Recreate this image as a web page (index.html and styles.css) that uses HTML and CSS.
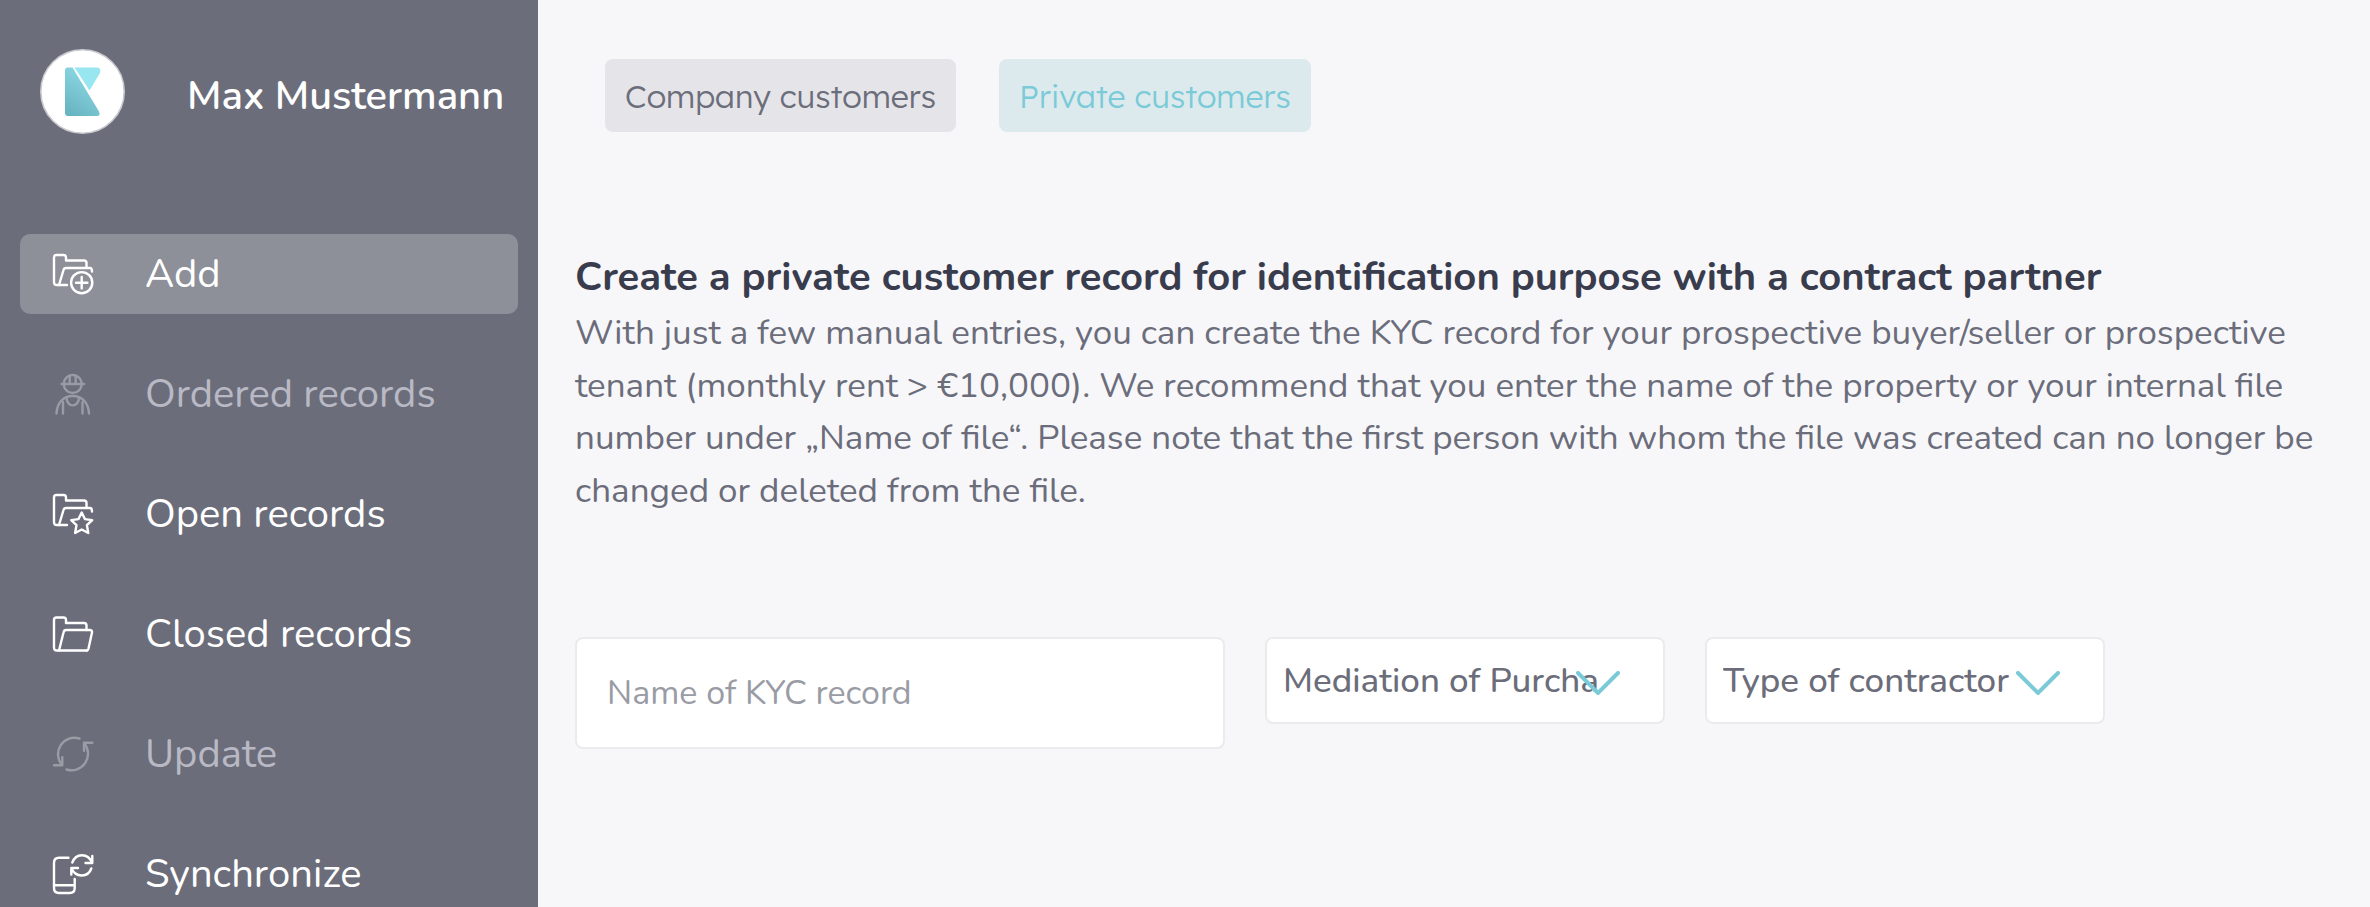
FILE: index.html
```html
<!DOCTYPE html>
<html lang="en">
<head>
    <meta charset="UTF-8">
    <meta name="viewport" content="width=device-width, initial-scale=1.0">
    <title>KYC records</title>
    <link rel="stylesheet" href="styles.css">
</head>
<body>

    <aside class="sidebar">
        <div class="profile">
            <svg class="avatar" viewBox="0 0 85 85" aria-hidden="true">
                <defs>
                    <linearGradient id="logoGradient" x1="0.7" y1="0" x2="0.2" y2="1">
                        <stop offset="0" stop-color="#8fdde9"/>
                        <stop offset="1" stop-color="#68b3c0"/>
                    </linearGradient>
                </defs>
                <circle cx="42.5" cy="42.5" r="41.7" fill="#fff" stroke="#c9c9ce" stroke-width="1.6"/>
                <path d="M28 18.500h4.500L59 62.500q2 4.500-2.500 4.500H28q-3 0-3-3V21.500q0-3 3-3z" fill="url(#logoGradient)"/>
                <path d="M34.500 18.500H57.500q4 1 2.500 5.500L49.500 41.500z" fill="#98e6f0"/>
            </svg>
            <span class="name">Max Mustermann</span>
        </div>

        <nav class="menu">
            <a href="#" class="item active">
                <svg class="icon" viewBox="0 0 41 41">
                    <path d="M14 31H4q-3 0-3-3V3.500Q1 1 3.500 1h7q2.500 0 2.500 2.500v3h18q2.500 0 2.500 2.500v4.500"/>
                    <path d="M6 31l4.500-15q.5-2 2.500-2h24q2 0 2 3.500"/>
                    <circle cx="28.700" cy="28.700" r="10.600"/>
                    <path d="M28.700 23v11.400M23 28.700h11.400"/>
                </svg>
                Add
            </a>
            <a href="#" class="item disabled">
                <svg class="icon" viewBox="0 0 41 41">
                    <circle cx="19.700" cy="10" r="9"/>
                    <path d="M8.500 10h22.500M16.700 2v8M22.700 2v8"/>
                    <path d="M3.500 39.500C4 30 9 22 19.700 22S35.500 30 36 39.500"/>
                    <path d="M10 39.500V28M29.500 39.500V28M13.500 23.500c0 10.500 12.500 10.500 12.500 0"/>
                </svg>
                Ordered records
            </a>
            <a href="#" class="item">
                <svg class="icon" viewBox="0 0 41 41">
                    <path d="M14 31H4q-3 0-3-3V3.500Q1 1 3.500 1h7q2.500 0 2.500 2.500v3h18q2.500 0 2.500 2.500v4.500"/>
                    <path d="M6 31l4.500-15q.5-2 2.500-2h24q2 0 2 3.500"/>
                    <path d="M28.700 18.500l3.200 6.600 7.300 1-5.300 5 1.400 7.900-6.600-3.500-6.600 3.500 1.400-7.900-5.300-5 7.300-1z"/>
                </svg>
                Open records
            </a>
            <a href="#" class="item">
                <svg class="icon" viewBox="0 0 41 41">
                    <path d="M34 36.500H4q-3 0-3-3V6q0-2.500 2.500-2.500h7Q13 3.500 13 6v3h18q2.500 0 2.500 2.500V16"/>
                    <path d="M6 36.500l4.500-18q.5-2.500 2.500-2.500h23.500q3 0 2.500 2.500l-3.500 16q-.5 2-2 2"/>
                </svg>
                Closed records
            </a>
            <a href="#" class="item disabled">
                <svg class="icon" viewBox="0 0 41 41">
                    <path d="M26.500 4.500A16.500 16.500 0 0 0 9 31M1 31.300h8.300v-8"/>
                    <path d="M13.500 35.500A16.500 16.500 0 0 0 31 9M39.300 8.700H31v8"/>
                </svg>
                Update
            </a>
            <a href="#" class="item">
                <svg class="icon" viewBox="0 0 41 41">
                    <path d="M15.500 3.700H6q-5 0-5 5V34q0 5 5 5h10.700q5 0 5-5v-9M1 31.300h20.700"/>
                    <path d="M19.300 8.500C23-1.500 35-1 39 8.500M32.500 9h6.800V2"/>
                    <path d="M38.300 14.500C35 24 22.500 23.500 18.500 14.500M25 14h-6.700v6.500"/>
                </svg>
                Synchronize
            </a>
        </nav>
    </aside>

    <main class="content">
        <div class="tabs">
            <button type="button" class="tab">Company customers</button>
            <button type="button" class="tab selected">Private customers</button>
        </div>

        <h1>Create a private customer record for identification purpose with a contract partner</h1>
        <p class="intro">With just a few manual entries, you can create the KYC record for your prospective buyer/seller or prospective tenant (monthly rent &gt; €10,000). We recommend that you enter the name of the property or your internal file number under „Name of file“. Please note that the first person with whom the file was created can no longer be changed or deleted from the file.</p>

        <form class="fields">
            <input type="text" class="record" placeholder="Name of KYC record" aria-label="Name of KYC record">
            <div class="dropdown">
                <select aria-label="Mediation">
                    <option>Mediation of Purchase</option>
                    <option>Mediation of Rent</option>
                </select>
                <svg class="arrow" viewBox="0 0 44 24"><path d="M2 2l20 20L42 2"/></svg>
            </div>
            <div class="dropdown">
                <select aria-label="Type of contractor">
                    <option>Type of contractor</option>
                </select>
                <svg class="arrow" viewBox="0 0 44 24"><path d="M2 2l20 20L42 2"/></svg>
            </div>
        </form>
    </main>

</body>
</html>
```

FILE: styles.css
```css
* {
    box-sizing: border-box;
}
body {
    margin: 0;
    display: flex;
    height: 100vh;
    overflow: hidden;
    background-color: #f7f7fa;
    color: #6b6d7a;
    font-family: Nunito, "Open Sans", sans-serif;
}
.sidebar {
    flex: 0 0 538px;
    padding: 49px 20px 0;
    background-color: #6b6d7a;
    color: white;
    overflow: hidden;
}
.profile {
    display: flex;
    align-items: center;
    gap: 62px;
    padding-left: 20px;
    margin-bottom: 100px;
}
.avatar {
    flex: none;
    width: 85px;
    height: 85px;
}
.name {
    padding-top: 8px;
    font-size: 40px;
    font-weight: 600;
    line-height: 56px;
    white-space: nowrap;
}
.menu {
    display: flex;
    flex-direction: column;
    gap: 40px;
}
.item {
    display: flex;
    align-items: center;
    gap: 51px;
    height: 80px;
    padding-left: 33px;
    border-radius: 10px;
    color: white;
    font-size: 40px;
    text-decoration: none;
    white-space: nowrap;
}
.item.active {
    background-color: #8d9099;
}
.item.disabled {
    color: #b8b9c4;
}
.icon {
    flex: none;
    width: 41px;
    height: 41px;
    fill: none;
    stroke: white;
    stroke-width: 2.4;
    stroke-linecap: round;
    stroke-linejoin: round;
    overflow: visible;
}
.disabled .icon {
    stroke: #999ca5;
}
.content {
    flex: 1;
    min-width: 0;
    padding: 59px 37px 0;
}
.tabs {
    display: flex;
    gap: 43px;
    padding-left: 30px;
    margin-bottom: 115px;
}
.tab {
    height: 73px;
    padding: 0 20px;
    border: none;
    border-radius: 8px;
    background-color: #e5e4e8;
    color: #6b6d7a;
    font-family: Lexend, Lato, sans-serif;
    font-size: 32px;
    font-weight: 300;
    cursor: pointer;
}
.tab.selected {
    background-color: #ddeaed;
    color: #7bcad8;
}
h1 {
    margin: 0;
    color: #393c4d;
    font-size: 40px;
    font-weight: 700;
    line-height: 60px;
}
.intro {
    margin: 0 0 120px;
    font-size: 35px;
    line-height: 1.5;
}
.fields {
    display: flex;
    align-items: flex-start;
    gap: 40px;
}
.record,
select {
    border: 2px solid #ebebed;
    border-radius: 8px;
    background-color: white;
    color: #6b6d7a;
    font-family: inherit;
}
.record {
    width: 650px;
    height: 112px;
    padding: 0 30px;
    font-size: 34px;
}
.record::placeholder {
    color: #999ca5;
}
.dropdown {
    position: relative;
    width: 400px;
}
select {
    appearance: none;
    width: 100%;
    height: 87px;
    padding: 0 64px 0 16px;
    font-size: 35px;
    font-weight: 500;
}
.arrow {
    position: absolute;
    top: 34px;
    right: 45px;
    width: 44px;
    height: 24px;
    fill: none;
    stroke: #7bcad8;
    stroke-width: 4;
    stroke-linecap: round;
    pointer-events: none;
}
```
